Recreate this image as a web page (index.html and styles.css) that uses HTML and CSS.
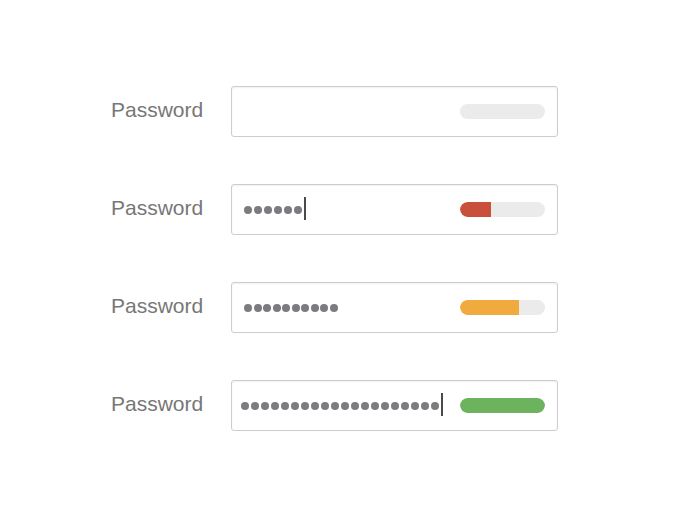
FILE: index.html
```html
<!DOCTYPE html>
<html>
<head>
<meta charset="utf-8">
<link rel="stylesheet" href="styles.css">
</head>
<body>
<div class="form">
  <div class="row">
    <label class="label">Password</label>
    <div class="field">
      <div class="value"></div>
      <div class="meter"><div class="fill" style="width:0px"></div></div>
    </div>
  </div>
  <div class="row">
    <label class="label">Password</label>
    <div class="field">
      <div class="value">
        <span class="dot"></span><span class="dot"></span><span class="dot"></span><span class="dot"></span><span class="dot"></span><span class="dot"></span>
        <span class="caret"></span>
      </div>
      <div class="meter"><div class="fill weak" style="width:31px"></div></div>
    </div>
  </div>
  <div class="row">
    <label class="label">Password</label>
    <div class="field">
      <div class="value narrow">
        <span class="dot"></span><span class="dot"></span><span class="dot"></span><span class="dot"></span><span class="dot"></span><span class="dot"></span><span class="dot"></span><span class="dot"></span><span class="dot"></span><span class="dot"></span>
      </div>
      <div class="meter"><div class="fill medium" style="width:59px"></div></div>
    </div>
  </div>
  <div class="row">
    <label class="label">Password</label>
    <div class="field">
      <div class="value tight">
        <span class="dot"></span><span class="dot"></span><span class="dot"></span><span class="dot"></span><span class="dot"></span><span class="dot"></span><span class="dot"></span><span class="dot"></span><span class="dot"></span><span class="dot"></span><span class="dot"></span><span class="dot"></span><span class="dot"></span><span class="dot"></span><span class="dot"></span><span class="dot"></span><span class="dot"></span><span class="dot"></span><span class="dot"></span><span class="dot"></span>
        <span class="caret"></span>
      </div>
      <div class="meter"><div class="fill strong" style="width:85px"></div></div>
    </div>
  </div>
</div>
</body>
</html>
```

FILE: styles.css
```css
html, body {
  margin: 0;
  padding: 0;
  background: #ffffff;
  font-family: "Liberation Sans", Arial, sans-serif;
}

.form {
  display: flex;
  flex-direction: column;
  gap: 47px;
  padding: 86px 0 0 111px;
}

.row {
  display: flex;
  align-items: center;
  gap: 27px;
}

.label {
  width: 93px;
  font-size: 21px;
  color: #777777;
  line-height: 24px;
  margin-top: -4px;
}

.field {
  box-sizing: border-box;
  width: 327px;
  height: 51px;
  border: 1px solid #cdcdcd;
  border-radius: 3px;
  box-shadow: inset 0 1px 2px rgba(0, 0, 0, 0.06);
  display: flex;
  align-items: center;
  justify-content: space-between;
  padding: 0 12px 0 12px;
}

.value {
  display: flex;
  align-items: center;
  gap: 2px;
  height: 24px;
}

.value.narrow {
  gap: 1.5px;
}

.value.tight {
  margin-left: -3px;
}

.dot {
  width: 8px;
  height: 8px;
  border-radius: 50%;
  background: #7b7b80;
}

.caret {
  width: 2px;
  height: 23px;
  background: #4a4a4a;
  margin-left: 0;
  margin-top: -2px;
}

.meter {
  width: 85px;
  height: 15px;
  border-radius: 8px;
  background: #ebebeb;
  overflow: hidden;
  display: flex;
}

.fill {
  height: 100%;
  border-radius: 8px 0 0 8px;
}

.fill.weak { background: #c9503a; }
.fill.medium { background: #f0aa3d; }
.fill.strong { background: #6db35e; border-radius: 8px; }
```
